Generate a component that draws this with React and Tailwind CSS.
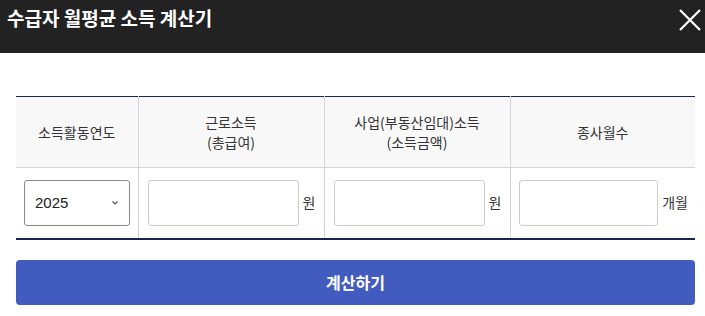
export default function App() {
  const font = { fontFamily: '"Noto Sans CJK KR", "Noto Sans", sans-serif' };
  return (
    <div className="w-[705px] h-[316px] bg-white overflow-hidden" style={font}>
      <div className="h-[53px] bg-[#222222] flex items-start justify-between pl-[7px] pr-[3px] pt-[4px]">
        <h1 className="text-[19px] font-bold text-white leading-[28px]">수급자 월평균 소득 계산기</h1>
        <svg width="24" height="24" viewBox="0 0 24 24" className="mt-[4px]">
          <path d="M2 2 L22 22 M22 2 L2 22" stroke="white" strokeWidth="2.2" />
        </svg>
      </div>
      <div className="pl-4 pr-[10px] pt-[43px]">
        <table className="w-full border-collapse table-fixed border-t border-t-[#1c2450] border-b-2 border-b-[#1c2450]">
          <colgroup>
            <col className="w-[122px]" />
            <col className="w-[186px]" />
            <col className="w-[186px]" />
            <col />
          </colgroup>
          <thead>
            <tr className="h-[71px] bg-[#f8f8f8]">
              <th className="font-normal text-[14px] text-[#333] leading-[20px] border-r border-[#d5d5d5] border-b">소득활동연도</th>
              <th className="font-normal text-[14px] text-[#333] leading-[20px] border-r border-[#d5d5d5] border-b">근로소득<br />(총급여)</th>
              <th className="font-normal text-[14px] text-[#333] leading-[20px] border-r border-[#d5d5d5] border-b">사업(부동산임대)소득<br />(소득금액)</th>
              <th className="font-normal text-[14px] text-[#333] leading-[20px] border-b border-[#d5d5d5]">종사월수</th>
            </tr>
          </thead>
          <tbody>
            <tr className="h-[71px]">
              <td className="border-r border-[#d5d5d5] px-2">
                <div className="h-[46px] border border-[#8a8a8a] rounded-[3px] flex items-center justify-between pl-[10px] pr-[10px]">
                  <span className="text-[15px] text-[#222]" style={{ fontFamily: '"Liberation Sans", Arial, sans-serif' }}>2025</span>
                  <svg width="8" height="6" viewBox="0 0 8 6"><path d="M1.5 1.5 L4 4 L6.5 1.5" stroke="#555" strokeWidth="1.2" fill="none" /></svg>
                </div>
              </td>
              <td className="border-r border-[#d5d5d5] pl-[9px] pr-2">
                <div className="flex items-center gap-[4px]">
                  <div className="flex-1 h-[46px] border border-[#cccccc] rounded-[3px] bg-white" />
                  <span className="text-[14px] text-[#333]">원</span>
                </div>
              </td>
              <td className="border-r border-[#d5d5d5] pl-[9px] pr-2">
                <div className="flex items-center gap-[4px]">
                  <div className="flex-1 h-[46px] border border-[#cccccc] rounded-[3px] bg-white" />
                  <span className="text-[14px] text-[#333]">원</span>
                </div>
              </td>
              <td className="pl-[8px] pr-[7px]">
                <div className="flex items-center gap-[4px]">
                  <div className="flex-1 h-[46px] border border-[#cccccc] rounded-[3px] bg-white" />
                  <span className="text-[14px] text-[#333]">개월</span>
                </div>
              </td>
            </tr>
          </tbody>
        </table>
        <button className="mt-[20px] w-full h-[45px] bg-[#425bbf] rounded-[4px] text-white text-[16px] font-bold">계산하기</button>
      </div>
    </div>
  );
}
